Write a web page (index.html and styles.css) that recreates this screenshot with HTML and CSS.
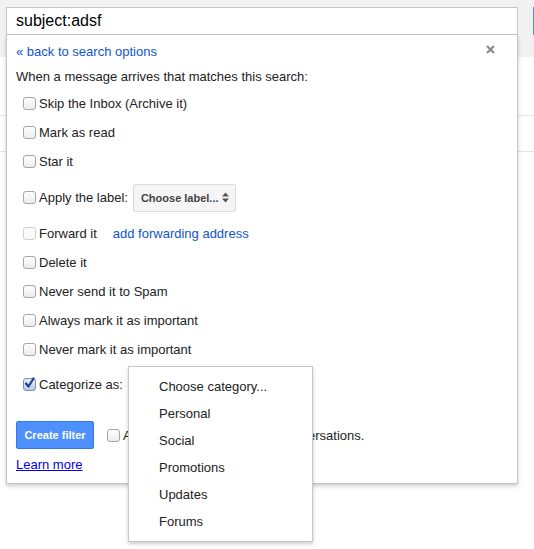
FILE: index.html
```html
<!DOCTYPE html>
<html>
<head>
<meta charset="utf-8">
<link rel="stylesheet" href="styles.css">
</head>
<body>
<div class="page">
  <div class="bg">
    <div class="band"><span class="blue-btn"></span></div>
    <div class="bg-row tall"></div>
    <div class="bg-row short"></div>
  </div>

  <div class="popup">
    <div class="search">subject:adsf</div>
    <div class="dialog">
      <svg class="close" width="9" height="9" viewBox="0 0 9 9"><path d="M1 1L8 8M8 1L1 8" stroke="#888" stroke-width="2" fill="none"/></svg>
      <a class="link back">« back to search options</a>
      <div class="intro">When a message arrives that matches this search:</div>
      <div class="opt"><span class="cb"></span>Skip the Inbox (Archive it)</div>
      <div class="opt"><span class="cb"></span>Mark as read</div>
      <div class="opt"><span class="cb"></span>Star it</div>
      <div class="opt opt-label"><span class="cb"></span>Apply the label:<span class="label-btn">Choose label...<svg class="updown" width="7" height="11" viewBox="0 0 7 11"><path d="M3.5 0.5L7 4.5H0Z M3.5 10.5L7 6.5H0Z" fill="#555"/></svg></span></div>
      <div class="opt"><span class="cb disabled"></span>Forward it<a class="link fwd">add forwarding address</a></div>
      <div class="opt"><span class="cb"></span>Delete it</div>
      <div class="opt"><span class="cb"></span>Never send it to Spam</div>
      <div class="opt"><span class="cb"></span>Always mark it as important</div>
      <div class="opt"><span class="cb"></span>Never mark it as important</div>
      <div class="opt opt-cat"><span class="cb checked"><svg width="13" height="13" viewBox="0 0 13 13"><path d="M3 6.5L5.5 9.5L10.5 1.5" stroke="#1f3f8f" stroke-width="2.2" fill="none" stroke-linecap="round" stroke-linejoin="round"/></svg></span>Categorize as:<span class="cat-select"></span></div>
      <div class="actions">
        <span class="create">Create filter</span>
        <span class="cb"></span><span class="also">Also apply filter to matching conversations.</span>
      </div>
      <a class="learn">Learn more</a>
    </div>
  </div>

  <div class="menu">
    <div class="item">Choose category...</div>
    <div class="item">Personal</div>
    <div class="item">Social</div>
    <div class="item">Promotions</div>
    <div class="item">Updates</div>
    <div class="item">Forums</div>
  </div>
</div>
</body>
</html>
```
FILE: styles.css
```css
html, body {
  margin: 0;
  padding: 0;
  background: #fff;
  overflow: hidden;
}
body {
  font-family: "Liberation Sans", Arial, sans-serif;
  font-size: 13px;
  color: #222;
  width: 534px;
  height: 549px;
}
.page {
  position: relative;
  width: 534px;
  height: 549px;
  overflow: hidden;
}
.band {
  height: 57px;
  background: #f1f1f1;
  position: relative;
}
.blue-btn {
  position: absolute;
  left: 533px;
  top: 7px;
  width: 40px;
  height: 28px;
  background: #4d90fe;
}
.bg-row {
  border-bottom: 1px solid #e5e5e5;
}
.bg-row.tall { height: 58px; }
.bg-row.short { height: 35px; }

.popup {
  position: absolute;
  left: 6px;
  top: 7px;
  width: 512px;
}
.search {
  height: 26px;
  border: 1px solid #c6c6c6;
  background: #fff;
  font-size: 16px;
  line-height: 26px;
  padding-left: 9px;
  color: #000;
}
.dialog {
  position: relative;
  background: #fff;
  border: 1px solid #c6c6c6;
  border-top: none;
  box-shadow: 0 2px 4px rgba(0,0,0,0.2);
  padding: 8px 9px 10px 9px;
  height: 449px;
  box-sizing: border-box;
}
.close {
  position: absolute;
  right: 22px;
  top: 10px;
}
.link {
  color: #15c;
  text-decoration: none;
}
.back {
  display: block;
  line-height: 17px;
}
.intro {
  line-height: 17px;
  margin-top: 8px;
  margin-bottom: 4px;
}
.opt {
  display: flex;
  align-items: center;
  height: 29px;
  padding-left: 7px;
}
.opt-label { height: 43px; }
.opt-cat { height: 41px; }
.cb {
  display: inline-block;
  width: 11px;
  height: 11px;
  border: 1px solid #a6a6a6;
  border-radius: 3px;
  background: linear-gradient(#ffffff, #ececec);
  margin-right: 3px;
  flex: none;
  position: relative;
}
.cb.disabled {
  border-color: #cfcfcf;
  background: #fafafa;
}
.cb.checked {
  border-color: #7d8fb3;
  background: linear-gradient(#e6eefb, #b9cbe8);
}
.cb.checked svg {
  position: absolute;
  left: -1px;
  top: -2px;
}
.label-btn {
  display: inline-flex;
  align-items: center;
  justify-content: space-between;
  box-sizing: border-box;
  width: 103px;
  height: 28px;
  margin-left: 5px;
  padding: 0 6px 0 7px;
  background: #f5f5f5;
  border: 1px solid #dcdcdc;
  border-radius: 2px;
  font-size: 11px;
  font-weight: bold;
  color: #444;
}
.updown { flex: none; }
.fwd { margin-left: 16px; }
.cat-select {
  display: inline-block;
  width: 60px;
  height: 22px;
  margin-left: 5px;
  border-left: 1px solid #4d90fe;
}
.actions {
  display: flex;
  align-items: center;
  margin-top: 16px;
}
.create {
  display: inline-flex;
  align-items: center;
  justify-content: center;
  box-sizing: border-box;
  width: 78px;
  height: 28px;
  background: #4d90fe;
  border: 1px solid #3079ed;
  border-radius: 2px;
  color: #fff;
  font-size: 11px;
  font-weight: bold;
  margin-right: 13px;
}
.also {
  line-height: 17px;
  word-spacing: -1px;
}
.learn {
  display: inline-block;
  margin-top: 7px;
  line-height: 17px;
  color: #00e;
  text-decoration: underline;
}
.menu {
  position: absolute;
  left: 128px;
  top: 366px;
  width: 183px;
  padding: 6px 0;
  background: #fff;
  border: 1px solid #c8c8c8;
  box-shadow: 0 2px 4px rgba(0,0,0,0.2);
}
.item {
  line-height: 27px;
  padding-left: 30px;
  color: #222;
}
```
